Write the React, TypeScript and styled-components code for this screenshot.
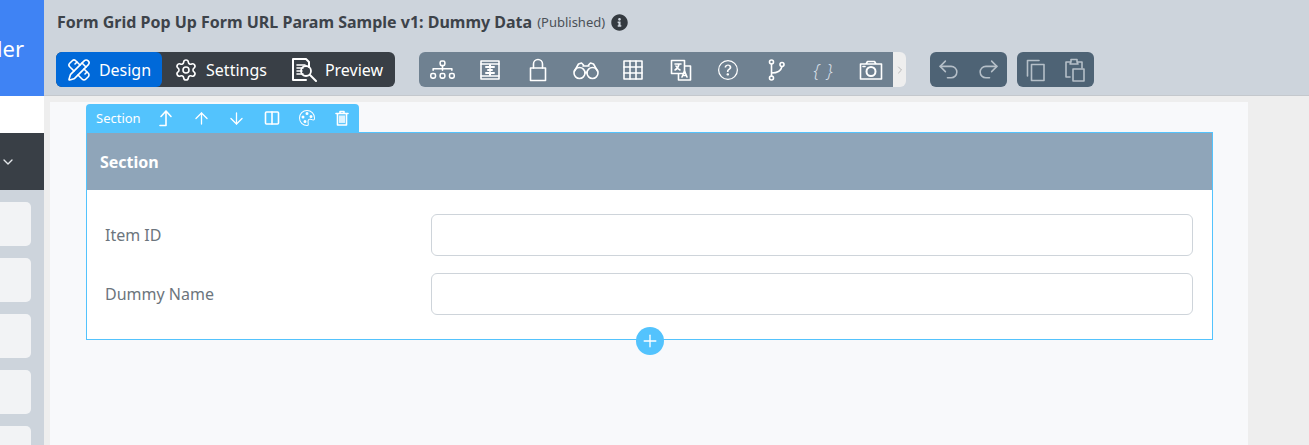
import styled, { createGlobalStyle } from "styled-components";
import { ArrowDown, ArrowUp, ChevronDown, ChevronRight, Plus, Redo2, Undo2, PencilRuler, Settings } from "lucide-react";
import { BsDiagram3, BsPalette, BsQuestionCircle } from "react-icons/bs";
import { FaInfoCircle } from "react-icons/fa";

const GlobalStyle = createGlobalStyle`
	html, body {
		margin: 0;
		height: 100%;
		overflow: hidden;
		background: #eeeeee;
		font-family: "Noto Sans", "Open Sans", sans-serif;
	}
	* { box-sizing: border-box; }
`;

// drawn icons
const Line = styled.svg.attrs({ fill: "none", stroke: "currentColor" })`
	display: block;
	stroke-width: 1.6;
	stroke-linecap: round;
	stroke-linejoin: round;
`;

const PreviewIcon = () => (
	<Line width="26" height="26" viewBox="0 0 26 26">
		<path d="M2 2h13l3 3v5M15 23H2V2" strokeWidth="2" />
		<path d="M6 8h8M6 11h6M6 14h5M6 17h6" />
		<circle cx="15" cy="14" r="5" strokeWidth="1.8" />
		<path d="M19 18l6 6" strokeWidth="2" />
	</Line>
);

const AlignIcon = () => (
	<Line width="24" height="24" viewBox="0 0 24 24">
		<rect x="3" y="3" width="18" height="18" />
		<path d="M3 6h18M3 18h18" />
		<path d="M8 9h8M8 15h8M12 7v3M12 17v-3M10 12h4" strokeWidth="2" />
	</Line>
);

const LockIcon = () => (
	<Line width="24" height="24" viewBox="0 0 24 24">
		<rect x="4.5" y="10" width="15" height="12.5" />
		<path d="M7.5 10V6a4.5 4.5 0 0 1 9 0v4" />
	</Line>
);

const BinocularsIcon = () => (
	<Line width="28" height="24" viewBox="0 0 28 24">
		<circle cx="7.5" cy="15" r="5.5" />
		<circle cx="20.5" cy="15" r="5.5" />
		<path d="M13 15c.7-1 1.3-1 2 0M2.500 13l4-7 3-1 2 2M25.500 13l-4-7-3-1-2 2M11 8h6" />
	</Line>
);

const GridIcon = () => (
	<Line width="24" height="24" viewBox="0 0 24 24">
		<rect x="3" y="3" width="18" height="18" />
		<path d="M3 9h18M3 15h18M9 3v18M15 3v18" />
	</Line>
);

const LanguageIcon = () => (
	<Line width="24" height="24" viewBox="0 0 24 24">
		<path d="M2.500 2.500h13v13h-13zM15.500 8h6v14h-12v-6.500" />
		<path d="M6 6h6M10 6c-.5 3-2 5-4 6M7 8c1 2 2 3 4 4M13 19l2.500-6 2.500 6M14 17.500h3" />
	</Line>
);

const BranchIcon = () => (
	<Line width="24" height="24" viewBox="0 0 24 24">
		<circle cx="7.500" cy="4" r="2" />
		<circle cx="7.500" cy="20" r="2" />
		<circle cx="18" cy="6.500" r="2" />
		<path d="M7.500 6v12M7.500 15c6 0 9.500-2 10.500-6.500" />
	</Line>
);

const CameraIcon = () => (
	<Line width="24" height="24" viewBox="0 0 24 24">
		<path d="M1.500 6h21v15h-21zM7 6l1.500-2.500h7L17 6" />
		<circle cx="12" cy="13.500" r="4.500" strokeWidth="2" />
		<path d="M4 8.500h2" />
	</Line>
);

const CopyIcon = () => (
	<Line width="24" height="24" viewBox="0 0 24 24">
		<path d="M3.500 18V2.500H15M7.500 6.500H20v16H7.500z" />
	</Line>
);

const PasteIcon = () => (
	<Line width="24" height="24" viewBox="0 0 24 24">
		<path d="M7 19H3V4h4M15 4h4v6M8 4V1.500h6V4l1 2H7z" />
		<path d="M10 11h11v12H10z" />
	</Line>
);

const MoveTopIcon = () => (
	<Line width="18" height="18" viewBox="0 0 18 18">
		<path d="M2 16.500h6V2M3 7.500L8 2l5 5.500" />
	</Line>
);

const ColumnsIcon = () => (
	<Line width="16" height="16" viewBox="0 0 16 16">
		<rect x="1.500" y="2" width="13" height="12" rx="1" />
		<path d="M8 2v12" />
	</Line>
);

const TrashIcon = () => (
	<Line width="16" height="16" viewBox="0 0 16 16">
		<path d="M2 3.500h12M6 3V1.500h4V3M3.500 3.500V15h9V3.500" />
		<path d="M6 6v6.500M8 6v6.500M10 6v6.500" />
	</Line>
);

const App = () => {
	return (
		<Page>
			<GlobalStyle />
			<Sidebar>
				<Brand>Form Builder</Brand>
				<BlankStrip />
				<DarkSelect>
					<ChevronDown size={16} />
				</DarkSelect>
				<CardList>
					{[0, 1, 2, 3, 4].map((i) => (
						<ElementCard key={i} />
					))}
				</CardList>
			</Sidebar>
			<Main>
				<TopBar>
					<TitleRow>
						<Title>Form Grid Pop Up Form URL Param Sample v1: Dummy Data</Title>
						<Status>(Published)</Status>
						<FaInfoCircle size={17} color="#343a40" />
					</TitleRow>
					<ToolRow>
						<ModeGroup>
							<ModeButton $active $width={106}>
								<PencilRuler size={24} strokeWidth={1.6} />
								Design
							</ModeButton>
							<ModeButton $width={117}>
								<Settings size={24} strokeWidth={1.6} />
								Settings
							</ModeButton>
							<ModeButton $width={116}>
								<PreviewIcon />
								Preview
							</ModeButton>
						</ModeGroup>
						<ToolGroup>
							<ToolScroll>
								<ToolButton><BsDiagram3 size={25} /></ToolButton>
								<ToolButton><AlignIcon /></ToolButton>
								<ToolButton><LockIcon /></ToolButton>
								<ToolButton><BinocularsIcon /></ToolButton>
								<ToolButton><GridIcon /></ToolButton>
								<ToolButton><LanguageIcon /></ToolButton>
								<ToolButton><BsQuestionCircle size={20} /></ToolButton>
								<ToolButton><BranchIcon /></ToolButton>
								<ToolButton><Braces>{"{ }"}</Braces></ToolButton>
								<ToolButton><CameraIcon /></ToolButton>
							</ToolScroll>
							<ScrollArrow>
								<ChevronRight size={12} />
							</ScrollArrow>
						</ToolGroup>
						<EditGroup $left={24}>
							<EditButton><Undo2 size={25} strokeWidth={1.5} /></EditButton>
							<EditButton><Redo2 size={25} strokeWidth={1.5} /></EditButton>
						</EditGroup>
						<EditGroup $left={10}>
							<EditButton><CopyIcon /></EditButton>
							<EditButton><PasteIcon /></EditButton>
						</EditGroup>
					</ToolRow>
				</TopBar>
				<Canvas>
					<SectionTools>
						<SectionName>Section</SectionName>
						<SectionTool><MoveTopIcon /></SectionTool>
						<SectionTool><ArrowUp size={19} strokeWidth={1.6} /></SectionTool>
						<SectionTool><ArrowDown size={19} strokeWidth={1.6} /></SectionTool>
						<SectionTool><ColumnsIcon /></SectionTool>
						<SectionTool><BsPalette size={16} /></SectionTool>
						<SectionTool><TrashIcon /></SectionTool>
					</SectionTools>
					<SectionBox>
						<SectionHeader>Section</SectionHeader>
						<SectionBody>
							<FieldRow>
								<FieldLabel>Item ID</FieldLabel>
								<FieldInput />
							</FieldRow>
							<FieldRow>
								<FieldLabel>Dummy Name</FieldLabel>
								<FieldInput />
							</FieldRow>
						</SectionBody>
						<AddButton>
							<Plus size={20} strokeWidth={1.6} />
						</AddButton>
					</SectionBox>
				</Canvas>
			</Main>
		</Page>
	);
};

export default App;

const Page = styled.div`
	display: flex;
	width: 1309px;
	height: 445px;
	overflow: hidden;
	background: #eeeeee;
`;

const Sidebar = styled.aside`
	flex: 0 0 44px;
	display: flex;
	flex-direction: column;
	background: #cdd4dc;
	overflow: hidden;
`;

const Brand = styled.div`
	flex: 0 0 96px;
	display: flex;
	align-items: center;
	justify-content: flex-end;
	padding-right: 20px;
	background: #3f83f4;
	color: #ffffff;
	font-size: 22px;
	white-space: nowrap;
`;

const BlankStrip = styled.div`
	flex: 0 0 37px;
	background: #ffffff;
`;

const DarkSelect = styled.div`
	flex: 0 0 57px;
	display: flex;
	align-items: center;
	padding-left: 0;
	background: #393f46;
	color: #e4e7ea;
`;

const CardList = styled.div`
	display: flex;
	flex-direction: column;
	gap: 12px;
	padding-top: 12px;
`;

const ElementCard = styled.div`
	flex: 0 0 44px;
	width: 31px;
	border-radius: 0 5px 5px 0;
	background: #f2f3f5;
`;

const Main = styled.main`
	flex: 1;
	display: flex;
	flex-direction: column;
	min-width: 0;
`;

const TopBar = styled.header`
	flex: 0 0 96px;
	padding: 12px 12px 0;
	background: #cdd4dc;
	border-bottom: 1px solid #c4c8cd;
`;

const TitleRow = styled.div`
	display: flex;
	align-items: center;
	height: 20px;
`;

const Title = styled.h1`
	margin: 0 5px 0 1px;
	color: #3d434a;
	font-size: 16px;
	font-weight: 700;
`;

const Status = styled.span`
	margin-right: 6px;
	color: #4a5057;
	font-size: 13px;
`;

const ToolRow = styled.div`
	display: flex;
	margin-top: 20px;
`;

const ModeGroup = styled.div`
	display: flex;
	height: 35px;
	background: #393f46;
	border-radius: 6px;
`;

const ModeButton = styled.div<{ $active?: boolean; $width: number }>`
	display: flex;
	align-items: center;
	justify-content: center;
	gap: 8px;
	width: ${({ $width }) => $width}px;
	border-radius: 6px;
	background: ${({ $active }) => ($active ? "#0069d9" : "transparent")};
	color: #ffffff;
	font-size: 16px;
`;

const ToolGroup = styled.div`
	display: flex;
	margin-left: 24px;
	height: 35px;
`;

const ToolScroll = styled.div`
	display: flex;
	width: 474px;
	overflow: hidden;
	background: #6f8191;
	border-radius: 6px 0 0 6px;
`;

const ToolButton = styled.div`
	flex: 0 0 47.6px;
	display: flex;
	align-items: center;
	justify-content: center;
	color: #ffffff;
`;

const Braces = styled.span`
	color: #d5dee6;
	font-size: 18px;
	font-style: italic;
	font-weight: 300;
	letter-spacing: 1px;
`;

const ScrollArrow = styled.div`
	flex: 0 0 13px;
	display: flex;
	align-items: center;
	justify-content: center;
	background: #eeeeee;
	border-radius: 0 6px 6px 0;
	color: #b8b8b8;
`;

const EditGroup = styled.div<{ $left: number }>`
	display: flex;
	align-items: center;
	justify-content: center;
	gap: 15px;
	width: 77px;
	height: 35px;
	margin-left: ${({ $left }) => $left}px;
	background: #4e6375;
	border-radius: 6px;
`;

const EditButton = styled.div`
	display: flex;
	color: #b5bfc8;
`;

const Canvas = styled.div`
	flex: 1;
	width: 1198px;
	margin: 6px 0 0 6px;
	padding: 2px 35px 0 36px;
	background: #f8f9fb;
`;

const SectionTools = styled.div`
	display: flex;
	align-items: center;
	width: 273px;
	height: 28px;
	padding-left: 10px;
	background: #53c3fd;
	border-radius: 4px 4px 0 0;
	color: #ffffff;
`;

const SectionName = styled.span`
	width: 59px;
	font-size: 13px;
`;

const SectionTool = styled.div`
	flex: 0 0 35px;
	display: flex;
	align-items: center;
	justify-content: center;
`;

const SectionBox = styled.section`
	position: relative;
	border: 1px solid #53c3fd;
	background: #ffffff;
`;

const SectionHeader = styled.div`
	display: flex;
	align-items: center;
	height: 57px;
	padding-left: 13px;
	background: #8fa5b9;
	color: #ffffff;
	font-size: 16px;
	font-weight: 700;
`;

const SectionBody = styled.div`
	display: flex;
	flex-direction: column;
	gap: 17px;
	padding: 24px 19px 24px 18px;
`;

const FieldRow = styled.div`
	display: flex;
	align-items: center;
`;

const FieldLabel = styled.label`
	flex: 0 0 326px;
	color: #6c757d;
	font-size: 16px;
`;

const FieldInput = styled.div`
	flex: 1;
	height: 42px;
	border: 1px solid #ced4da;
	border-radius: 6px;
	background: #ffffff;
`;

const AddButton = styled.div`
	position: absolute;
	left: 549px;
	bottom: -16px;
	display: flex;
	align-items: center;
	justify-content: center;
	width: 28px;
	height: 28px;
	border-radius: 50%;
	background: #53c3fd;
	color: #ffffff;
`;
